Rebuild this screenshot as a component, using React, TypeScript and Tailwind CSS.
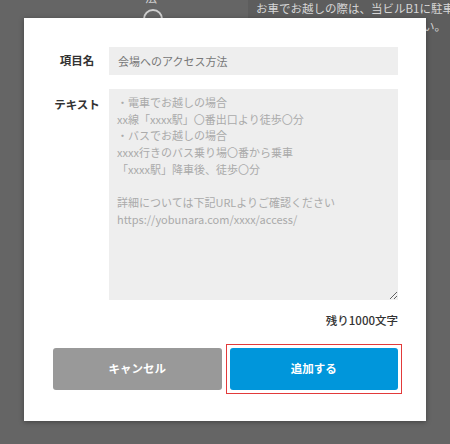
import React from 'react';

const placeholder = [
  '・電車でお越しの場合',
  'xx線「xxxx駅」〇番出口より徒歩〇分',
  '・バスでお越しの場合',
  'xxxx行きのバス乗り場〇番から乗車',
  '「xxxx駅」降車後、徒歩〇分',
  '',
  '詳細については下記URLよりご確認ください',
  'https://yobunara.com/xxxx/access/',
].join('\n');

export default function App() {
  return (
    <div className="relative h-[444px] w-[450px] overflow-hidden bg-[#656565] font-['Noto_Sans_CJK_JP','Noto_Sans',sans-serif]">
      {/* page behind the overlay */}
      <div className="flex">
        <div className="flex-1 pl-[145px]">
          <div className="-mt-[11px] text-[12px] leading-[18px] text-[#cfcfcf]">法</div>
          <div className="ml-[-2px] mt-[2px] h-[20px] w-[20px] rounded-full border-2 border-[#cfcfcf]"></div>
        </div>
        <div className="h-[160px] w-[202px] bg-[#5d5d5d] pl-2 pr-[4px] text-[11.5px] leading-[18px] whitespace-nowrap text-[#d6d6d6]">
          <div className="-mt-[1px]">お車でお越しの際は、当ビルB1に駐車</div>
          <div className="text-right">場がありますのでご利用下さい。</div>
        </div>
      </div>

      {/* modal */}
      <div className="absolute left-[24px] top-[18px] flex h-[403px] w-[402px] flex-col bg-white pl-[29px] pr-[28px] pt-[29px] shadow-[0_1px_5px_rgba(0,0,0,0.35)]">
        <div className="flex items-center gap-2">
          <div className="w-12 text-center text-[11.5px] font-bold text-[#333]">項目名</div>
          <div className="flex h-[28px] flex-1 items-center bg-[#eeeeee] px-[9px] text-[11px] text-[#777]">
            会場へのアクセス方法
          </div>
        </div>

        <div className="mt-[14px] flex items-start gap-2">
          <div className="w-12 pt-[7px] text-center text-[11.5px] font-bold text-[#333]">テキスト</div>
          <textarea
            readOnly
            placeholder={placeholder}
            className="h-[211px] flex-1 bg-[#eeeeee] px-2 pt-[5px] text-[11px] leading-[16.7px] text-[#777] outline-none placeholder:text-[#aaaaaa]"
          />
        </div>

        <div className="mt-[11px] text-right text-[11.5px] font-medium leading-[18px] text-[#333]">残り1000文字</div>

        <div className="mt-[19px] grid grid-cols-2 gap-2">
          <button className="h-[42px] rounded-[3px] bg-[#999999] text-[11.5px] font-bold text-white">キャンセル</button>
          <div className="-m-[4px] border border-[#e23a3a] p-[3px]">
            <button className="h-[42px] w-full rounded-[3px] bg-[#0096db] text-[11.5px] font-bold text-white">
              追加する
            </button>
          </div>
        </div>
      </div>
    </div>
  );
}
